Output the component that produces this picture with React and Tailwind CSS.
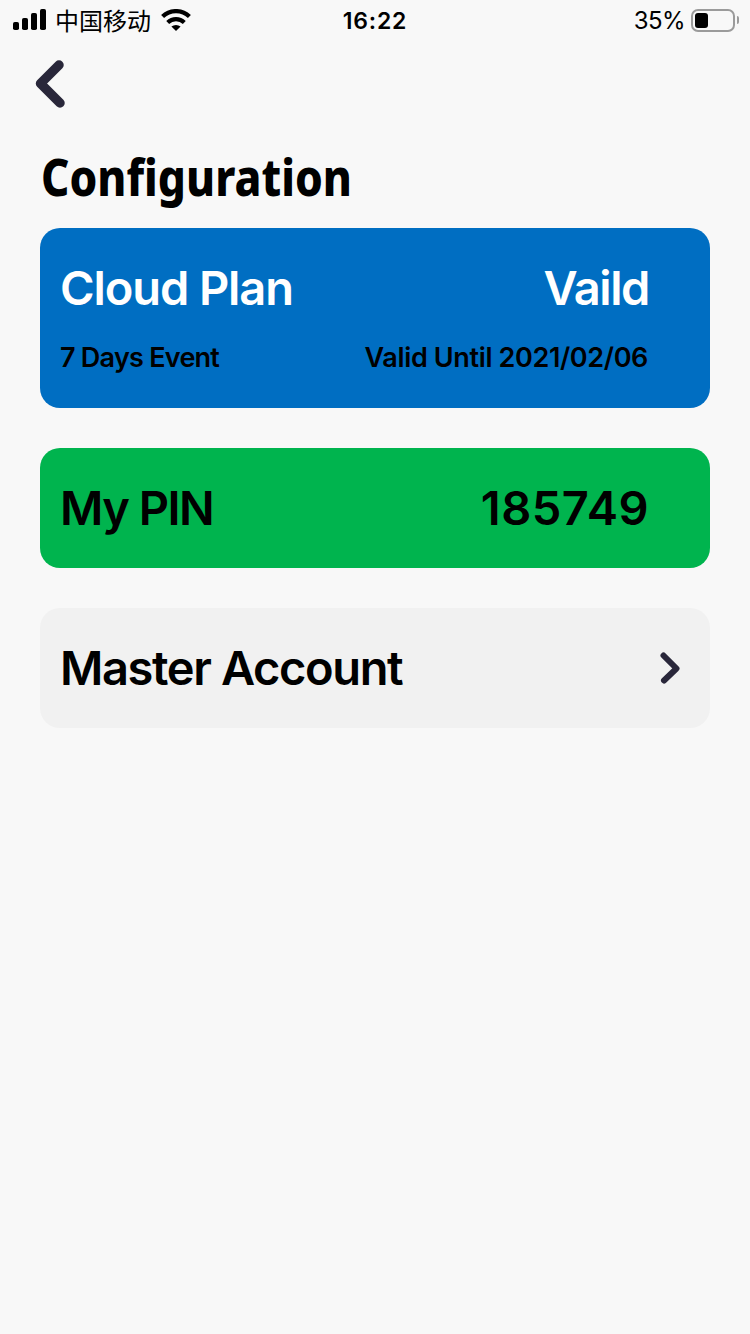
import React from "react";

const SignalIcon = () => (
  <svg className="ml-[13px] h-[22px] w-[34px]" viewBox="0 0 34 22">
    <rect x="0" y="13" width="6" height="8" rx="1.8" />
    <rect x="9" y="9" width="6" height="12" rx="1.8" />
    <rect x="18" y="4" width="6" height="17" rx="1.8" />
    <rect x="27" y="0" width="6" height="21" rx="1.8" />
  </svg>
);

const WifiIcon = () => (
  <svg className="h-[22px] w-[30px]" viewBox="0 0 30 22">
    <g fill="none" stroke="#000" strokeWidth="4.2">
      <path d="M1.6 7.6a19 19 0 0 1 26.8 0" />
      <path d="M6.7 13.4a12 12 0 0 1 16.6 0" />
    </g>
    <path d="M15 22l-4.6-4.4a7 7 0 0 1 9.2 0z" />
  </svg>
);

const BatteryIcon = () => (
  <div className="flex items-center gap-[2px]">
    <div className="h-[23px] w-[44px] rounded-[7px] border-2 border-[#9b9b9b] p-[2px]">
      <div className="h-[15px] w-[13px] rounded-[3px] bg-black" />
    </div>
    <div className="h-[8px] w-[2px] rounded-r-full bg-[#9b9b9b]" />
  </div>
);

const StatusBar = () => (
  <div className="grid h-10 grid-cols-3 items-center text-black">
    <div className="flex items-center">
      <SignalIcon />
      <span className="mr-[10px] ml-2 font-['Noto_Sans_CJK_SC',sans-serif] text-[24px] leading-10 whitespace-nowrap">
        中国移动
      </span>
      <WifiIcon />
    </div>
    <span className="pt-[2px] text-center text-[23px] font-semibold tracking-[0.8px]">16:22</span>
    <div className="flex items-center justify-end gap-[6px] pr-[11px]">
      <span className="pt-[2px] text-[24px] tracking-[-0.6px]">35%</span>
      <BatteryIcon />
    </div>
  </div>
);

const App = () => {
  return (
    <div className="min-h-screen bg-[#f8f8f8] font-['Inter',sans-serif] text-black">
      <StatusBar />

      {/* Back button */}
      <button className="mt-5 ml-[35px] block">
        <svg className="h-12 w-[30px]" viewBox="0 0 30 48" fill="none" stroke="#29273a">
          <path d="M24 5L5.5 23.5L25 43" strokeWidth="9.5" strokeLinecap="round" strokeLinejoin="round" />
        </svg>
      </button>

      <main className="px-10">
        <h1 className="mt-[33px] ml-[1px] h-[87px] w-max origin-left scale-x-[0.85] font-['Noto_Sans',sans-serif] text-[52px] leading-[70px] font-extrabold whitespace-nowrap [font-variant-ligatures:none]">
          Configuration
        </h1>

        <div className="flex flex-col gap-10 font-semibold">
          {/* Cloud plan */}
          <section className="h-[180px] rounded-[20px] bg-[#006ec2] pr-[62px] pl-5">
            <div className="flex h-[120px] items-center justify-between text-[47px] text-white">
              <span className="tracking-[-1.1px]">Cloud Plan</span>
              <span className="-mr-[1px] tracking-[-1.4px]">Vaild</span>
            </div>
            <div className="-mt-[10px] flex h-10 items-center justify-between text-[27px]">
              <span className="tracking-[-0.75px]">7 Days Event</span>
              <span className="tracking-[-0.36px]">Valid Until 2021/02/06</span>
            </div>
          </section>

          {/* PIN */}
          <section className="flex h-[120px] items-center justify-between rounded-[20px] bg-[#00b44e] pr-[62px] pl-5 text-[47px]">
            <span className="tracking-[-1.5px]">My PIN</span>
            <span className="-mr-[1px] tracking-[0.5px]">185749</span>
          </section>

          {/* Master account */}
          <button className="flex h-[120px] items-center justify-between rounded-[20px] bg-[#f1f1f1] pr-[30px] pl-5 text-[47px]">
            <span className="tracking-[-1.38px]">Master Account</span>
            <svg className="h-8 w-5" viewBox="0 0 20 32" fill="none" stroke="#29273a">
              <path d="M3.5 3.5L16.5 16.5L4 28.5" strokeWidth="6" strokeLinecap="round" strokeLinejoin="round" />
            </svg>
          </button>
        </div>
      </main>
    </div>
  );
};

export default App;
